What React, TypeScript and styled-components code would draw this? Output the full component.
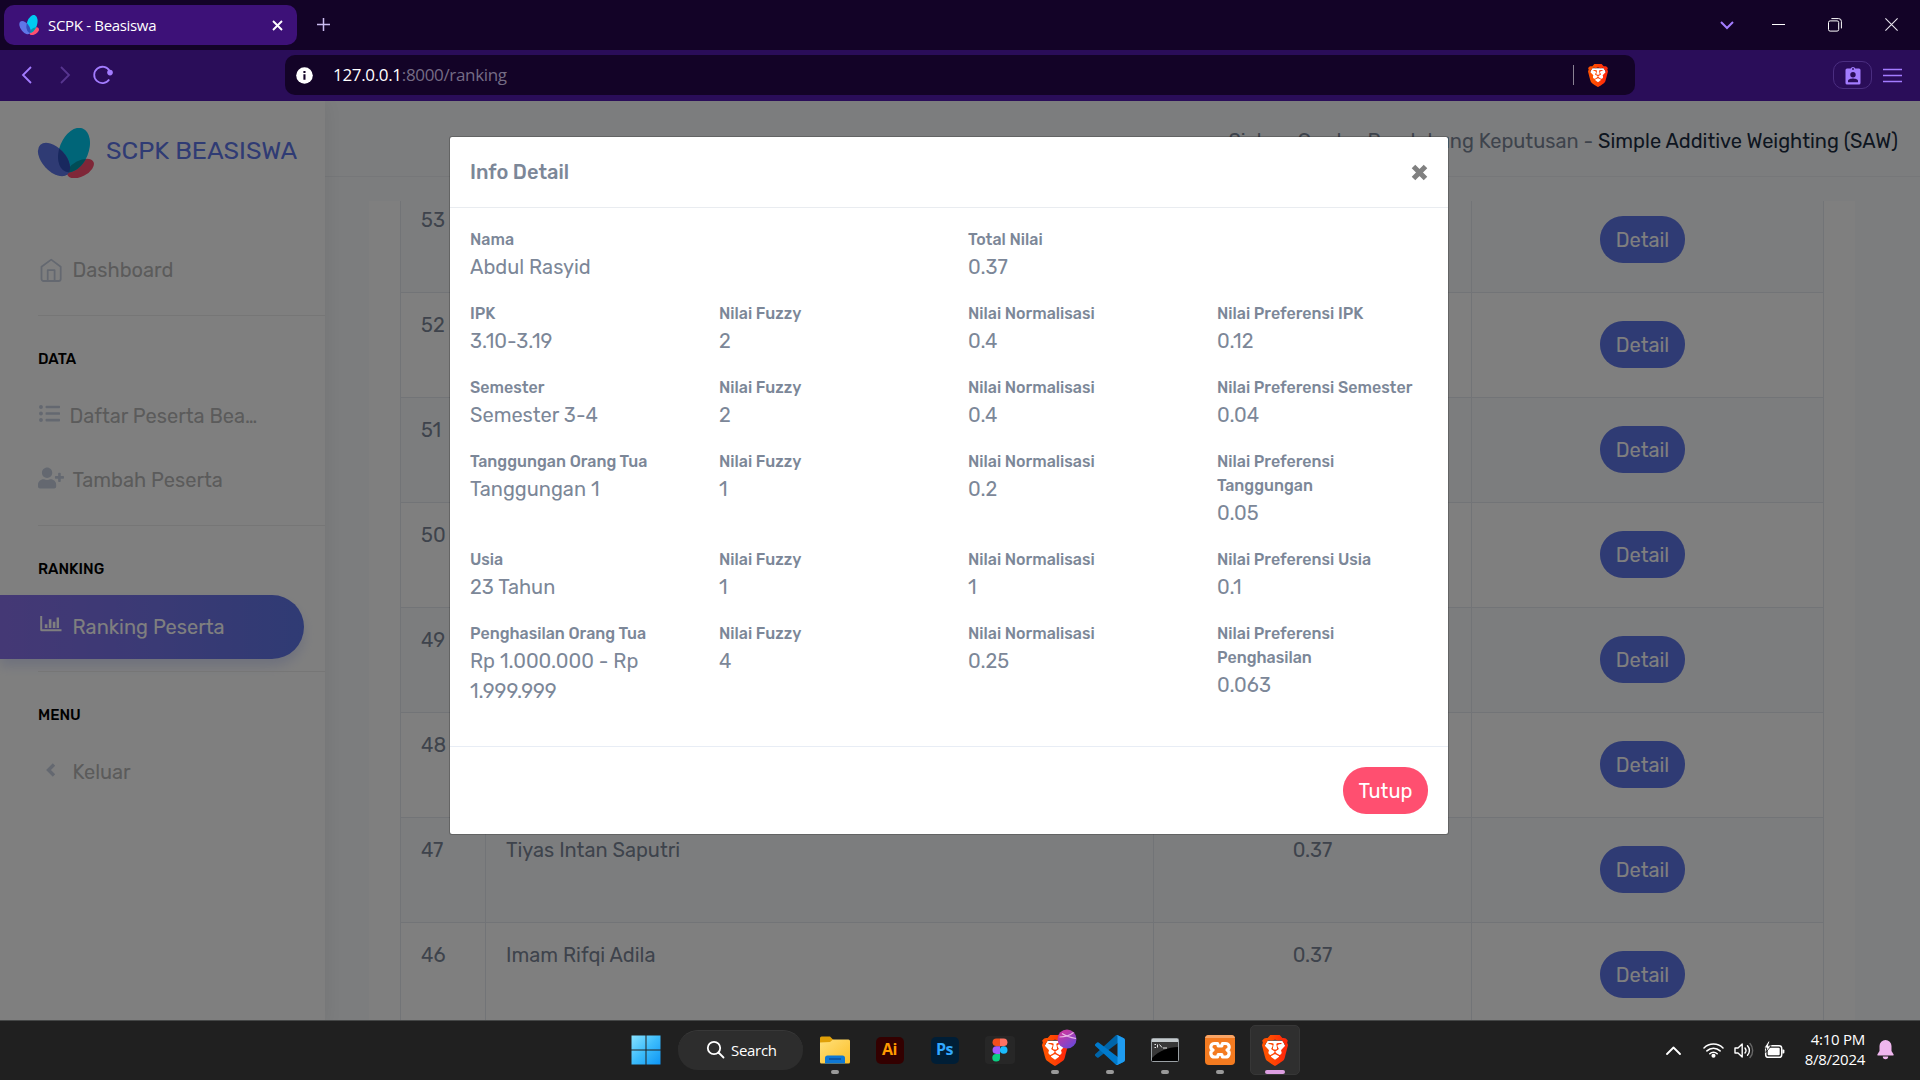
import React from "react";
import styled, { createGlobalStyle, css } from "styled-components";
import { SiBrave } from "react-icons/si";
import { FaListUl, FaUserPlus } from "react-icons/fa";

const GlobalStyle = createGlobalStyle`
  *, *::before, *::after { box-sizing: border-box; }
  body { margin: 0; overflow: hidden; background: #202020; }
  button { font: inherit; border: 0; padding: 0; background: none; }
  svg { display: block; flex: none; }
`;

const uiFont = `"Open Sans", "Noto Sans", sans-serif`;
const pageFont = `Rubik, Roboto, "Noto Sans", sans-serif`;

const Screen = styled.div`
  width: 1920px;
  height: 1080px;
  display: grid;
  grid-template-rows: 50px 51px 919px 60px;
  overflow: hidden;
`;

/* ---------- Browser chrome ---------- */

const TabStrip = styled.header`
  display: flex;
  align-items: center;
  background: #130327;
  padding: 0 22px 1px 4px;
`;

const Tab = styled.div`
  width: 293px;
  height: 40px;
  border-radius: 10px;
  background: #3d1178;
  display: flex;
  align-items: center;
  padding: 0 14px 0 15px;
  margin-top: 1px;
  color: #fff;
  font: 400 15px/20px ${uiFont};
  letter-spacing: -0.32px;
`;

const TabTitle = styled.span`
  flex: 1;
  margin: -1px 0 0 9px;
`;

const NewTab = styled.button`
  margin-left: 20px;
`;

const WindowControls = styled.div`
  margin-left: auto;
  display: flex;
  align-items: center;
  gap: 43px;
`;

const SearchTabs = styled.button`
  margin: 1px -5px 0 0;
`;

const Toolbar = styled.nav`
  display: flex;
  align-items: center;
  background: #2a0d59;
  padding: 0 18px 1px 21px;
`;

const NavButtons = styled.div`
  display: flex;
  align-items: center;
  width: 264px;
  gap: 26px;
`;

const Reload = styled.button`
  margin-left: -4px;
`;

const AddressBar = styled.div`
  width: 1350px;
  height: 40px;
  border-radius: 10px;
  background: #130327;
  display: flex;
  align-items: center;
  padding: 0 27px 0 11px;
`;

const Url = styled.span`
  flex: 1;
  margin-left: 20px;
  font: 400 17px/24px ${uiFont};
  letter-spacing: -0.33px;
  color: #756c85;
  b { font-weight: 400; color: #fff; }
`;

const BarDivider = styled.i`
  width: 1px;
  height: 20px;
  margin-right: 14px;
  background: #8a8293;
`;

const ToolbarEnd = styled.div`
  margin-left: auto;
  display: flex;
  align-items: center;
  gap: 11px;
`;

const ProfileBadge = styled.button`
  width: 39px;
  height: 28px;
  border: 1px solid #4a2d80;
  border-radius: 10px;
  display: grid;
  place-items: center;
`;

/* ---------- Page ---------- */

const Page = styled.main`
  position: relative;
  display: grid;
  grid-template-columns: 325px 1fr;
  overflow: hidden;
  background: #f9fbfd;
  font: 400 20px/30px ${pageFont};
  color: #7c8798;
`;

const Sidebar = styled.aside`
  background: #fff;
  box-shadow: 1px 0 20px rgba(0, 0, 0, 0.08);
  z-index: 1;
`;

const Brand = styled.div`
  height: 137px;
  padding: 27px 0 0 37px;
  display: flex;
  gap: 12px;
  color: #5f76e8;
  font-size: 25px;
  line-height: 46px;
`;

const NavGroup = styled.section``;

const Rule = styled.hr<{ $gap?: number }>`
  height: 1px;
  border: 0;
  margin: ${(p) => p.$gap ?? 12}px 0 0 38px;
  background: #ececec;
`;

const Caption = styled.h2<{ $gap?: number }>`
  margin: 0;
  padding: 28px 0 ${(p) => p.$gap ?? 10}px 38px;
  font-size: 15px;
  line-height: 30px;
  font-weight: 500;
  color: #000;
`;

const NavItem = styled.a<{ $active?: boolean }>`
  display: flex;
  align-items: center;
  height: 64px;
  width: 304px;
  color: #b6b6b6;
  padding-left: 37.5px;
  white-space: nowrap;
  ${(p) =>
    p.$active &&
    css`
      color: #fff;
      border-radius: 0 32px 32px 0;
      background: linear-gradient(to right, #8971ea, #7f72ea, #7574ea, #6a75e9, #5f76e8);
      box-shadow: 0 7px 12px 0 rgba(95, 118, 232, 0.21);
    `}
`;

const NavIcon = styled.span<{ $width?: number; $lift?: number; $active?: boolean; $indent?: number }>`
  width: ${(p) => p.$width ?? 35}px;
  height: 30px;
  display: flex;
  align-items: center;
  padding: 0 0 ${(p) => p.$lift ?? 0}px ${(p) => p.$indent ?? 0}px;
  color: ${(p) => (p.$active ? "#fff" : "#c8d1e1")};
`;

const Main = styled.div`
  display: flex;
  flex-direction: column;
  min-width: 0;
`;

const TopBar = styled.div`
  height: 76px;
  flex: none;
  border-bottom: 1px solid #eceff3;
  padding: 25px 22px 0 0;
  text-align: right;
`;

const Strong = styled.span`
  color: #1c2d41;
`;

const ScrollArea = styled.div`
  flex: 1;
  min-height: 0;
  margin: 24px 65px 0 44px;
  padding: 0 31px;
  overflow: hidden;
  background: #fff;
`;

const Table = styled.div`
  margin-top: -13px;
  border-left: 1px solid #e4e9ef;
`;

const Row = styled.div<{ $striped: boolean }>`
  display: grid;
  grid-template-columns: 85px 668px 318px 352px;
  height: 105px;
  border-bottom: 1px solid #e4e9ef;
  background: ${(p) => (p.$striped ? "#f9fbfd" : "#fff")};
`;

const Cell = styled.div<{ $center?: boolean }>`
  border-right: 1px solid #e4e9ef;
  padding: 17px 20px 0;
  text-align: ${(p) => (p.$center ? "center" : "left")};
`;

const ActionCell = styled(Cell)`
  padding: 28px 10px 0 0;
  display: flex;
  justify-content: center;
`;

const Pill = styled.button<{ $tone: "primary" | "danger" }>`
  width: 85px;
  height: 47px;
  border-radius: 23px;
  color: #fff;
  background: ${(p) => (p.$tone === "primary" ? "#5f76e8" : "#ff4f70")};
`;

/* ---------- Modal ---------- */

const Backdrop = styled.div`
  position: absolute;
  inset: 0;
  z-index: 2;
  background: rgba(0, 0, 0, 0.5);
  display: flex;
  justify-content: center;
  align-items: flex-start;
  padding: 35px 22px 0 0;
`;

const Modal = styled.div`
  width: 1000px;
  border: 1px solid rgba(0, 0, 0, 0.2);
  border-radius: 3px;
  background: #fff;
  background-clip: padding-box;
`;

const ModalHeader = styled.div`
  height: 71px;
  padding: 0 20px;
  border-bottom: 1px solid #e9ecf0;
  display: flex;
  align-items: center;
  justify-content: space-between;
  font-weight: 500;
`;

const ModalBody = styled.div`
  padding: 20px 20px 0;
  height: 538px;
`;

const DetailRow = styled.div<{ $columns: number }>`
  display: grid;
  grid-template-columns: repeat(${(p) => p.$columns}, ${(p) => 996 / p.$columns}px);
  margin-bottom: 20px;
`;

const Field = styled.div`
  width: 208px;
`;

const FieldLabel = styled.div`
  font-size: 16px;
  line-height: 24px;
  font-weight: 500;
`;

const ModalFooter = styled.div`
  height: 88px;
  padding: 20px;
  border-top: 1px solid #e8edf5;
  display: flex;
  justify-content: flex-end;
`;

/* ---------- Taskbar ---------- */

const Taskbar = styled.footer`
  display: flex;
  align-items: center;
  background: #202020;
  border-top: 1px solid #454747;
  padding: 0 26px 1px 618px;
  color: #fff;
  font: 400 15px/20px ${uiFont};
`;

const TaskSlot = styled.div`
  width: 55px;
  height: 100%;
  display: grid;
  place-items: center;
  position: relative;
`;

const ActiveTile = styled.div`
  width: 50px;
  height: 50px;
  border-radius: 5px;
  background: #2f2f2f;
  border: 1px solid #373737;
  display: grid;
  place-items: center;
`;

const Indicator = styled.i<{ $active?: boolean }>`
  position: absolute;
  bottom: 5px;
  left: 50%;
  transform: translateX(-50%);
  width: ${(p) => (p.$active ? 20 : 8)}px;
  height: 4px;
  border-radius: 2px;
  background: ${(p) => (p.$active ? "#dd9fe2" : "#9a9a9a")};
`;

const SearchBox = styled.div`
  width: 125px;
  height: 40px;
  margin: 0 4px 0 5px;
  border-radius: 20px;
  background: #2d2d2d;
  border-top: 1px solid #383838;
  display: flex;
  align-items: center;
  gap: 6px;
  padding: 0 0 2px 28px;
  letter-spacing: -0.3px;
`;

const AppBadge = styled.div<{ $bg: string; $fg: string }>`
  width: 28px;
  height: 27px;
  border-radius: 5px;
  background: ${(p) => p.$bg};
  color: ${(p) => p.$fg};
  font: 700 16px/24px ${uiFont};
  letter-spacing: -0.5px;
  text-align: center;
`;

const BraveStack = styled.div`
  position: relative;
`;

const ProfileBall = styled.svg`
  position: absolute;
  left: 15px;
  top: -6px;
`;

const Tray = styled.div`
  margin-left: auto;
  display: flex;
  align-items: center;
`;

const TrayIcon = styled.span<{ $gap: number }>`
  margin-right: ${(p) => p.$gap}px;
`;

const Clock = styled.div`
  text-align: right;
  letter-spacing: -0.27px;
  margin: -2px 12px 0 0;
`;

/* ---------- Drawings ---------- */

const Butterfly = ({ width, height }: { width: number; height: number }) => (
  <svg width={width} height={height} viewBox="0 0 57 50" preserveAspectRatio="none">
    <ellipse cx="43.5" cy="40.5" rx="8" ry="14.6" transform="rotate(62 43.5 40.5)" fill="#ff4f70" />
    <ellipse cx="37" cy="22" rx="14.5" ry="23.2" transform="rotate(22 37 22)" fill="#01caf1" />
    <ellipse cx="17" cy="31.5" rx="11.6" ry="20" transform="rotate(-43 17 31.5)" fill="#5f76e8" />
    <clipPath id="wing"><ellipse cx="37" cy="22" rx="14.5" ry="23.2" transform="rotate(22 37 22)" /></clipPath>
    <g clipPath="url(#wing)">
      <ellipse cx="43.5" cy="40.5" rx="8" ry="14.6" transform="rotate(62 43.5 40.5)" fill="#0298ad" />
      <ellipse cx="17" cy="31.5" rx="11.6" ry="20" transform="rotate(-43 17 31.5)" fill="#3150bd" />
    </g>
  </svg>
);

const Brave = ({ w, h, id }: { w: number; h: number; id: string }) => (
  <svg width={w} height={h} viewBox="1.8 0 20.4 24" preserveAspectRatio="none">
    <defs>
      <linearGradient id={id} x1="0" x2="24" y1="0" y2="0" gradientUnits="userSpaceOnUse">
        <stop offset="0.3" stopColor="#ff5000" />
        <stop offset="0.8" stopColor="#ff2a0a" />
      </linearGradient>
    </defs>
    <path d="M6 4.5h12l2 4-3 9-5 4-5-4-3-9z" fill="#fff" />
    <SiBrave size={24} fill={`url(#${id})`} stroke="none" />
  </svg>
);

type StrokeProps = { w: number; h: number; d: string; color?: string; sw?: number; cap?: "butt" | "round" };
const Stroke = ({ w, h, d, color = "#fff", sw = 1.5, cap = "butt" }: StrokeProps) => (
  <svg width={w} height={h} viewBox={`0 0 ${w} ${h}`} fill="none" stroke={color} strokeWidth={sw} strokeLinecap={cap} strokeLinejoin={cap === "round" ? "round" : "miter"}>
    <path d={d} />
  </svg>
);

/* ---------- Data ---------- */

type Entry = [label: string, value: string];

const details: Entry[][] = [
  [["Nama", "Abdul Rasyid"], ["Total Nilai", "0.37"]],
  [["IPK", "3.10-3.19"], ["Nilai Fuzzy", "2"], ["Nilai Normalisasi", "0.4"], ["Nilai Preferensi IPK", "0.12"]],
  [["Semester", "Semester 3-4"], ["Nilai Fuzzy", "2"], ["Nilai Normalisasi", "0.4"], ["Nilai Preferensi Semester", "0.04"]],
  [["Tanggungan Orang Tua", "Tanggungan 1"], ["Nilai Fuzzy", "1"], ["Nilai Normalisasi", "0.2"], ["Nilai Preferensi Tanggungan", "0.05"]],
  [["Usia", "23 Tahun"], ["Nilai Fuzzy", "1"], ["Nilai Normalisasi", "1"], ["Nilai Preferensi Usia", "0.1"]],
  [["Penghasilan Orang Tua", "Rp 1.000.000 - Rp 1.999.999"], ["Nilai Fuzzy", "4"], ["Nilai Normalisasi", "0.25"], ["Nilai Preferensi Penghasilan", "0.063"]],
];

const rows: { no: number; name?: string; total?: string }[] = [
  { no: 53 }, { no: 52 }, { no: 51 }, { no: 50 }, { no: 49 }, { no: 48 },
  { no: 47, name: "Tiyas Intan Saputri", total: "0.37" },
  { no: 46, name: "Imam Rifqi Adila", total: "0.37" },
];

export default function App() {
  return (
    <>
      <GlobalStyle />
      <Screen>
        <TabStrip>
          <Tab>
            <Butterfly width={20} height={20} />
            <TabTitle>SCPK - Beasiswa</TabTitle>
            <Stroke w={11} h={11} d="M1 1l9 9M10 1l-9 9" sw={1.9} />
          </Tab>
          <NewTab><Stroke w={13} h={13} d="M6.5 0v13M0 6.5h13" color="#cbbcf0" /></NewTab>
          <WindowControls>
            <SearchTabs><Stroke w={14} h={9} d="M1 1l6 6 6-6" color="#a37cff" sw={2} /></SearchTabs>
            <Stroke w={13} h={13} d="M0 6.5h13" sw={1} />
            <svg width="14" height="14" viewBox="0 0 14 14" fill="none" stroke="#fff">
              <rect x="0.5" y="2.9" width="10.2" height="10.2" rx="1.6" />
              <path d="M3.4 0.6h7.2a2.8 2.8 0 0 1 2.8 2.8v7" />
            </svg>
            <Stroke w={13} h={13} d="M0.4 0.4l12.2 12.2M12.6 0.4L0.4 12.6" color="#e8e4ee" sw={1.1} />
          </WindowControls>
        </TabStrip>

        <Toolbar>
          <NavButtons>
            <Stroke w={12} h={18} d="M10 1L2 9l8 8" color="#a37cff" sw={1.8} />
            <Stroke w={12} h={18} d="M2 1l8 8-8 8" color="#573590" sw={1.8} />
            <Reload>
              <svg width="21" height="20" viewBox="0 0 21 20">
                <path d="M16.2 14.6A8.2 8.2 0 1 1 16.6 6" fill="none" stroke="#a37cff" strokeWidth="1.8" />
                <circle cx="17" cy="7.6" r="2.8" fill="#a37cff" />
              </svg>
            </Reload>
          </NavButtons>
          <AddressBar>
            <svg width="17" height="17" viewBox="0 0 17 17">
              <circle cx="8.5" cy="8.5" r="8.3" fill="#fff" />
              <path d="M7.4 4h2.1v2H7.4zM7.4 7.2h2.1v5.6H7.4z" fill="#130327" />
            </svg>
            <Url><b>127.0.0.1</b>:8000/ranking</Url>
            <BarDivider />
            <Brave w={20} h={23} id="lion-bar" />
          </AddressBar>
          <ToolbarEnd>
            <ProfileBadge>
              <svg width="16" height="19" viewBox="0 0 16 19">
                <path d="M2 2.6h3.7a2.4 2.4 0 0 1 4.6 0H14A1.5 1.5 0 0 1 15.5 4.1V17a1.5 1.5 0 0 1-1.5 1.5H2A1.5 1.5 0 0 1 .5 17V4.1A1.5 1.5 0 0 1 2 2.6z" fill="#a37cff" />
                <circle cx="8" cy="3" r="0.9" fill="#2a0d59" />
                <circle cx="8" cy="8.8" r="2.7" fill="#2a0d59" />
                <path d="M3 16.2v-1.2c0-1.6 3.2-2.4 5-2.4s5 .8 5 2.4v1.2z" fill="#2a0d59" />
              </svg>
            </ProfileBadge>
            <Stroke w={19} h={15} d="M0 1.5h19M0 7.5h19M0 13.5h19" color="#a37cff" sw={1.6} />
          </ToolbarEnd>
        </Toolbar>

        <Page>
          <Sidebar>
            <Brand>
              <Butterfly width={57} height={50} />
              <span>SCPK BEASISWA</span>
            </Brand>

            <NavItem>
              <NavIcon>
                <svg width="27" height="26" viewBox="0 0 27 26" fill="none" stroke="currentColor" strokeWidth="1.8" strokeLinejoin="round">
                  <path d="M3.5 9.8L13.2 2.6 22.7 9.8V22a2 2 0 0 1-2 2H5.5a2 2 0 0 1-2-2z" />
                  <path d="M9.7 24V13.2h6.9V24" />
                </svg>
              </NavIcon>
              Dashboard
            </NavItem>
            <Rule $gap={13} />

            <NavGroup>
              <Caption>DATA</Caption>
              <NavItem>
                <NavIcon $width={32} $lift={5} $indent={1}><FaListUl size={21} /></NavIcon>
                Daftar Peserta Bea…
              </NavItem>
              <NavItem>
                <NavIcon $lift={5}><FaUserPlus size={26} /></NavIcon>
                Tambah Peserta
              </NavItem>
              <Rule $gap={13} />
            </NavGroup>

            <NavGroup>
              <Caption $gap={11}>RANKING</Caption>
              <NavItem $active>
                <NavIcon $active $lift={6}>
                  <svg width="24" height="18" viewBox="0 0 24 18" fill="currentColor">
                    <path d="M2.2 1h2v13.3H23.5v2H3.7a1.5 1.5 0 0 1-1.5-1.5zM6.8 9.3h2.6v3.6H6.8zM10.8 4.3h2.6v8.6h-2.6zM14.8 6.8h2.6v6.1h-2.6zM18.6 2.6h2.4v10.3h-2.4z" />
                  </svg>
                </NavIcon>
                Ranking Peserta
              </NavItem>
              <Rule />
            </NavGroup>

            <NavGroup>
              <Caption>MENU</Caption>
              <NavItem>
                <NavIcon $lift={5}>
                  <Stroke w={20} h={16} d="M16 2.5L10.5 8l5.5 5.5" color="currentColor" sw={3.4} />
                </NavIcon>
                Keluar
              </NavItem>
            </NavGroup>
          </Sidebar>

          <Main>
            <TopBar>
              Sistem Cerdas Pendukung Keputusan - <Strong>Simple Additive Weighting (SAW)</Strong>
            </TopBar>
            <ScrollArea>
              <Table>
                {rows.map((r) => (
                  <Row key={r.no} $striped={r.no % 2 === 1}>
                    <Cell>{r.no}</Cell>
                    <Cell>{r.name}</Cell>
                    <Cell $center>{r.total}</Cell>
                    <ActionCell><Pill $tone="primary">Detail</Pill></ActionCell>
                  </Row>
                ))}
              </Table>
            </ScrollArea>
          </Main>

          <Backdrop>
            <Modal>
              <ModalHeader>
                <span>Info Detail</span>
                <Stroke w={17} h={17} d="M2.5 2.5l12 12M14.5 2.5l-12 12" color="#808080" sw={5} />
              </ModalHeader>
              <ModalBody>
                {details.map((cols, i) => (
                  <DetailRow key={i} $columns={cols.length}>
                    {cols.map(([label, value]) => (
                      <Field key={label}>
                        <FieldLabel>{label}</FieldLabel>
                        <div>{value}</div>
                      </Field>
                    ))}
                  </DetailRow>
                ))}
              </ModalBody>
              <ModalFooter><Pill $tone="danger">Tutup</Pill></ModalFooter>
            </Modal>
          </Backdrop>
        </Page>

        <Taskbar>
          <TaskSlot>
            <svg width="30" height="30" viewBox="0 0 30 30">
              <defs>
                <linearGradient id="win" x1="0" y1="0" x2="30" y2="30" gradientUnits="userSpaceOnUse">
                  <stop offset="0" stopColor="#8be4ff" />
                  <stop offset="0.5" stopColor="#3cbcfb" />
                  <stop offset="1" stopColor="#0c94f5" />
                </linearGradient>
              </defs>
              <path d="M0.5 0.5h14v14h-14zM15.5 0.5h14v14h-14zM0.5 15.5h14v14h-14zM15.5 15.5h14v14h-14z" fill="url(#win)" />
            </svg>
          </TaskSlot>
          <SearchBox>
            <svg width="19" height="19" viewBox="0 0 19 19" fill="none" stroke="#fff" strokeWidth="1.8">
              <circle cx="8" cy="8" r="6.2" />
              <path d="M12.5 12.5l5 5" strokeLinecap="round" />
            </svg>
            Search
          </SearchBox>
          <TaskSlot>
            <svg width="30" height="28" viewBox="0 0 30 28">
              <defs>
                <linearGradient id="folder" x2="1" y2="1"><stop stopColor="#ffe07a" /><stop offset="1" stopColor="#fcbf28" /></linearGradient>
              </defs>
              <path d="M0 2a1.5 1.5 0 0 1 1.5-1.5h8.5l3.5 3.5v6H0z" fill="#e0a008" />
              <path d="M0 6.5L10 6l3-2.5h15.5A1.5 1.5 0 0 1 30 5v21a1.5 1.5 0 0 1-1.5 1.5h-27A1.5 1.5 0 0 1 0 26z" fill="url(#folder)" />
              <path d="M5 27.5v-5.5a2.5 2.5 0 0 1 2.5-2.5h15a2.5 2.5 0 0 1 2.5 2.5v5.5z" fill="#0f78d4" />
              <path d="M9 23h12" stroke="#0b4a92" strokeWidth="1.3" />
            </svg>
            <Indicator />
          </TaskSlot>
          <TaskSlot><AppBadge $bg="#330000" $fg="#ff9a00">Ai</AppBadge></TaskSlot>
          <TaskSlot><AppBadge $bg="#001e36" $fg="#31a8ff">Ps</AppBadge></TaskSlot>
          <TaskSlot>
            <svg width="30" height="28" viewBox="0 0 30 28">
              <rect width="30" height="28" rx="4" fill="#272727" />
              <path d="M15 2.5h-3.6a3.8 3.8 0 0 0 0 7.7H15z" fill="#f24e1e" />
              <path d="M15 2.5h3.6a3.8 3.8 0 0 1 0 7.7H15z" fill="#ff7262" />
              <path d="M15 10.2h-3.6a3.8 3.8 0 0 0 0 7.7H15z" fill="#a259ff" />
              <circle cx="18.7" cy="14" r="3.8" fill="#1abcfe" />
              <path d="M15 17.9h-3.6a3.85 3.85 0 1 0 3.6 3.85z" fill="#0acf83" />
            </svg>
          </TaskSlot>
          <TaskSlot>
            <BraveStack>
              <Brave w={26} h={31} id="lion-profile" />
              <ProfileBall width="20" height="20" viewBox="0 0 20 20">
                <defs><linearGradient id="ball" x2="0.7" y2="1"><stop offset="0.3" stopColor="#c03aa6" /><stop offset="1" stopColor="#6a48d8" /></linearGradient></defs>
                <circle cx="10" cy="10" r="9.5" fill="url(#ball)" />
                <path d="M2.5 8c6 0 11-2 14-4.500M5 4.500c3 2 8 4 14 5" stroke="#e9b8e4" strokeWidth="1.1" fill="none" />
              </ProfileBall>
            </BraveStack>
            <Indicator />
          </TaskSlot>
          <TaskSlot>
            <svg width="30" height="30" viewBox="0 0 100 100">
              <path d="M96.46 10.8L75.86.88a6.23 6.23 0 0 0-7.11 1.2L1.3 63.58a4.17 4.17 0 0 0 0 6.17l5.51 5a4.17 4.17 0 0 0 5.32.24l81.23-61.62c2.73-2.07 6.64-.13 6.64 3.3v-.24a6.25 6.25 0 0 0-3.54-5.63z" fill="#0065a9" />
              <path d="M96.46 89.2l-20.6 9.92a6.23 6.23 0 0 1-7.11-1.2L1.3 36.42a4.17 4.17 0 0 1 0-6.17l5.51-5a4.17 4.17 0 0 1 5.32-.24l81.23 61.62c2.73 2.07 6.64.13 6.64-3.3v.24a6.25 6.25 0 0 1-3.54 5.63z" fill="#007acc" />
              <path d="M75.86 99.13a6.23 6.23 0 0 1-7.11-1.21C71.06 100.22 75 98.59 75 95.33V4.67c0-3.26-3.94-4.89-6.25-2.59a6.23 6.23 0 0 1 7.11-1.21l20.6 9.91A6.25 6.25 0 0 1 100 16.41v67.18a6.25 6.25 0 0 1-3.54 5.63z" fill="#1f9cf0" />
            </svg>
            <Indicator />
          </TaskSlot>
          <TaskSlot>
            <svg width="28" height="24" viewBox="0 0 28 24">
              <rect x="0.5" y="0.5" width="27" height="23" rx="1" fill="#000" stroke="#9aa0a4" />
              <path d="M1 1h26v3H1z" fill="#c4cacd" />
              <path d="M1 4h26v5C17 9 8 13 1 20z" fill="#383838" />
              <path d="M3.5 6.5h1.5M3.5 9.5h1.5M6.5 6.5v3M8.5 6.5l2.5 3M12 10h4" stroke="#e8e8e8" strokeWidth="1" fill="none" />
            </svg>
            <Indicator />
          </TaskSlot>
          <TaskSlot>
            <svg width="30" height="30" viewBox="0 0 30 30">
              <rect width="30" height="30" rx="4" fill="#f47b20" />
              <path d="M4 0h22a4 4 0 0 1 4 3H0a4 4 0 0 1 4-3z" fill="#f9a566" />
              <path d="M9.5 8.5c-4 0-5 5-1.5 6.5-3.5 1.5-2.5 7 1.5 7h3l.8-2.5h3.4l.8 2.5h3c4 0 5-5.5 1.5-7 3.5-1.5 2.5-6.500-1.500-6.500h-3l-.8 2.500h-3.400l-.8-2.500z" fill="none" stroke="#fff" strokeWidth="3.2" strokeLinejoin="round" />
            </svg>
            <Indicator />
          </TaskSlot>
          <TaskSlot>
            <ActiveTile><Brave w={26} h={31} id="lion-active" /></ActiveTile>
            <Indicator $active />
          </TaskSlot>

          <Tray>
            <TrayIcon $gap={22}><Stroke w={15} h={9} d="M1 8l6.5-6.5L14 8" sw={1.8} cap="round" /></TrayIcon>
            <TrayIcon $gap={10}>
              <svg width="21" height="16" viewBox="0 0 21 16" fill="none" stroke="#fff" strokeWidth="1.5" strokeLinecap="round">
                <path d="M1 6a13.4 13.4 0 0 1 19 0M3.9 8.9a9.3 9.3 0 0 1 13.2 0M6.8 11.7a5.2 5.2 0 0 1 7.4 0" />
                <circle cx="10.5" cy="13.8" r="1.3" fill="#fff" />
              </svg>
            </TrayIcon>
            <TrayIcon $gap={10}>
              <svg width="20" height="17" viewBox="0 0 20 17" fill="none" stroke="#fff" strokeWidth="1.4" strokeLinecap="round" strokeLinejoin="round">
                <path d="M1 6h3L8.2 2v13L4 11H1z" />
                <path d="M11 6a4 4 0 0 1 0 5M13.5 3.7a7 7 0 0 1 0 9.6" />
                <path d="M16 1.5a10.5 10.5 0 0 1 0 14" stroke="#666" />
              </svg>
            </TrayIcon>
            <TrayIcon $gap={20}>
              <svg width="21" height="18" viewBox="0 0 21 18">
                <rect x="1.7" y="4.7" width="16" height="11.6" rx="2.6" fill="none" stroke="#fff" strokeWidth="1.5" />
                <rect x="3.7" y="6.7" width="12" height="7.6" rx="1" fill="#fff" />
                <path d="M18.4 8.5h1a1 1 0 0 1 1 1v2a1 1 0 0 1-1 1h-1z" fill="#fff" />
                <path d="M4.5 0L0 7h2.8L1.8 11.5 7.2 4.8H4.3L6 0z" fill="#fff" stroke="#202020" strokeWidth="0.9" />
              </svg>
            </TrayIcon>
            <Clock>
              <div>4:10 PM</div>
              <div>8/8/2024</div>
            </Clock>
            <svg width="17" height="20" viewBox="0 0 17 20" fill="#efb6ee">
              <path d="M8.5 0a6 6 0 0 1 6 6v5l2 3.2c.4.7 0 1.3-.7 1.3H1.2c-.7 0-1.1-.6-.7-1.3L2.5 11V6a6 6 0 0 1 6-6zM5.8 16.5h5.4a2.7 2.7 0 0 1-5.4 0z" />
            </svg>
          </Tray>
        </Taskbar>
      </Screen>
    </>
  );
}
